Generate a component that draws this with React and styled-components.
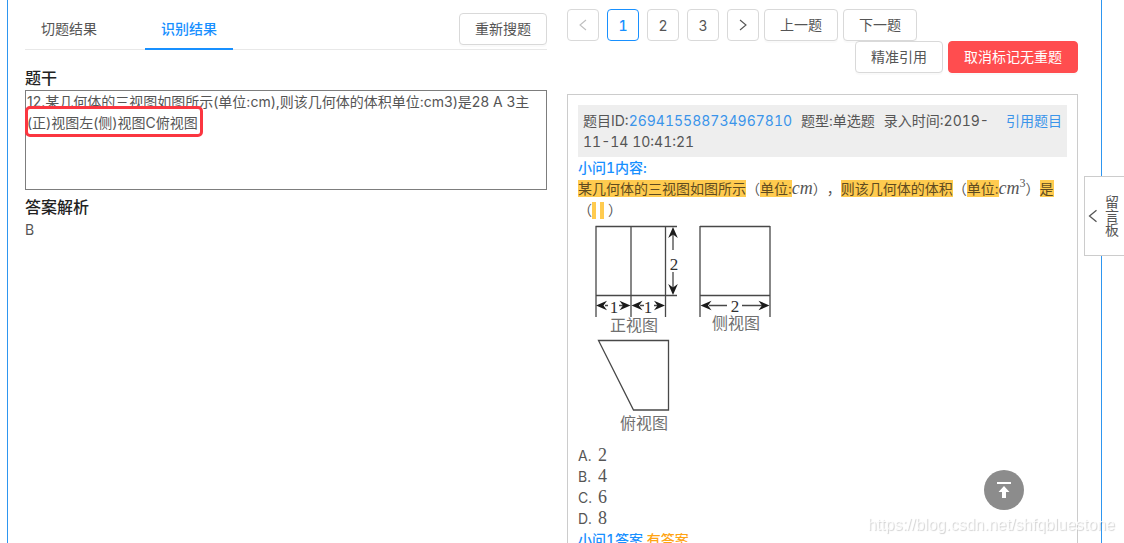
import React from "react";
import styled, { createGlobalStyle, css } from "styled-components";

const blue = "#1890ff";
const linkBlue = "#3a94ea";
const text = "#555";
const line = "#d9d9d9";

const GlobalStyle = createGlobalStyle`
  *, *::before, *::after { box-sizing: border-box; }
  html { scrollbar-width: none; }
  body {
    margin: 0;
    background: #fff;
    color: ${text};
    font: 14px/21px Inter, "Noto Sans CJK SC", sans-serif;
    font-variant-numeric: tabular-nums;
    text-spacing-trim: space-all;
  }
  button, textarea { font: inherit; color: inherit; }
  a { color: ${linkBlue}; text-decoration: none; }
`;

const Frame = styled.main`
  display: grid;
  grid-template-columns: minmax(0, 522fr) minmax(0, 511fr);
  gap: 20px;
  min-height: 100vh;
  margin: 0 22px 0 7px;
  padding: 9px 23px 0 17px;
  border-left: 1px solid #2e96f0;
  border-right: 1px solid #2e96f0;
`;

const Column = styled.section`
  min-width: 0;
`;

const TabBar = styled.div`
  display: flex;
  align-items: flex-start;
  gap: 32px;
  height: 41px;
  margin-bottom: 16px;
  border-bottom: 1px solid #e8e8e8;
`;

const Tab = styled.button`
  height: 41px;
  padding: 0 16px;
  border: 0;
  border-bottom: 2px solid ${(p) => (p.$active ? blue : "transparent")};
  background: none;
  color: ${(p) => (p.$active ? blue : text)};
  font-weight: ${(p) => (p.$active ? 500 : 400)};
  cursor: pointer;
`;

const Button = styled.button`
  height: 32px;
  padding: 0 15px;
  border: 1px solid ${line};
  border-radius: 4px;
  background: #fff;
  box-shadow: 0 2px 0 rgba(0, 0, 0, 0.02);
  line-height: 20px;
  white-space: nowrap;
  cursor: pointer;
  ${(p) =>
    p.$danger &&
    css`
      border-color: #ff4d4f;
      background: #ff4d4f;
      color: #fff;
    `}
`;

const TabAction = styled.div`
  margin: 4px 0 0 auto;
`;

const Heading = styled.label`
  display: block;
  color: #222;
  font-size: 16px;
  font-weight: 500;
  line-height: 24px;
`;

const StemField = styled.div`
  position: relative;
  height: 100px;
  margin-bottom: 5px;
`;

const Stem = styled.textarea`
  display: block;
  width: 100%;
  height: 100%;
  padding: 0 1px;
  border: 1px solid #7d7d7d;
  border-radius: 0;
  outline: 0;
  background: #fff;
  font-variant-numeric: normal;
  resize: none;
`;

const RedOutline = styled.span`
  position: absolute;
  top: 16px;
  left: 0;
  width: 178px;
  height: 31px;
  border: 3px solid #fb3640;
  border-radius: 5px;
  pointer-events: none;
`;

const Answer = styled.output`
  display: block;
`;

const Pager = styled.nav`
  display: flex;
  gap: 5px;
`;

const Pages = styled.div`
  display: flex;
  gap: 8px;
`;

const PageButton = styled.button`
  display: grid;
  place-items: center;
  width: 32px;
  height: 32px;
  padding: 0;
  border: 1px solid ${(p) => (p.$active ? blue : line)};
  border-radius: 4px;
  background: #fff;
  color: ${(p) => (p.$active ? blue : text)};
  font-weight: ${(p) => (p.$active ? 500 : 400)};
  cursor: pointer;
  &:disabled { color: #bfbfbf; cursor: not-allowed; }
`;

const Actions = styled.div`
  display: flex;
  justify-content: flex-end;
  gap: 5px;
  margin-bottom: 21px;
`;

const Card = styled.article`
  padding: 10px;
  border: 1px solid #ccc;
`;

const Meta = styled.header`
  display: flex;
  align-items: flex-start;
  gap: 8px;
  padding: 5px;
  background: #eee;
`;

const MetaText = styled.div`
  flex: 1;
`;

const MetaItem = styled.span`
  margin-right: 9px;
`;

const PartTitle = styled.div`
  color: ${blue};
  font-weight: 500;
`;

const HasAnswer = styled.span`
  color: #ffa414;
`;

const Paragraph = styled.p`
  margin: 0;
`;

const Mark = styled.mark`
  background: #ffcb4f;
  color: #5f4b20;
`;

const Blank = styled.mark`
  display: inline-block;
  width: 4px;
  height: 17px;
  margin-right: 4px;
  background: #ffcb4f;
  vertical-align: -4px;
`;

const MathText = styled.span`
  font-family: "Liberation Serif", serif;
  font-size: 18px;
  line-height: 1px;
  font-style: ${(p) => (p.$upright ? "normal" : "italic")};
`;

const Power = styled.sup`
  font-size: 12px;
  font-style: normal;
  line-height: 1px;
`;

const Figure = styled.figure`
  height: 225px;
  margin: 0;
  padding: 1px 0 0 12px;
`;

const Drawing = styled.svg`
  display: block;
`;

const Options = styled.ol`
  margin: 0;
  padding: 0;
  list-style: none;
`;

const Option = styled.li`
  display: flex;
  align-items: center;
  height: 21px;
`;

const Letter = styled.span`
  width: 20px;
`;

const MessageTab = styled.button`
  position: fixed;
  top: 176px;
  right: 0;
  display: flex;
  align-items: center;
  gap: 4px;
  width: 40px;
  height: 80px;
  padding: 0 0 0 1px;
  border: 1px solid #ccc;
  border-right: 0;
  background: #fff;
  line-height: 14px;
  cursor: pointer;
`;

const MessageLabel = styled.span`
  width: 16px;
`;

const BackTop = styled.button`
  position: fixed;
  right: 100px;
  bottom: 33px;
  display: grid;
  place-items: center;
  width: 40px;
  height: 40px;
  padding: 0;
  border: 0;
  border-radius: 50%;
  background: #8c8c8c;
  color: #fff;
  cursor: pointer;
`;

const Watermark = styled.div`
  position: fixed;
  right: 9px;
  bottom: 8px;
  color: rgba(255, 255, 255, 0.8);
  font: 16px/20px "Liberation Sans", sans-serif;
  text-shadow: 1px 1px 1px rgba(0, 0, 0, 0.18);
  pointer-events: none;
`;

function Chevron({ dir = "left", size = 12 }) {
  return (
    <svg width={size} height={size} viewBox="0 0 12 12" fill="none" stroke="currentColor" aria-hidden="true">
      <path d={dir === "left" ? "M9 1 3 6l6 5" : "M3 1l6 5-6 5"} strokeWidth="1.1" />
    </svg>
  );
}

/* Arrow head with a notched back; the tip is at x,y. */
function Head({ x, y, turn }) {
  return <path d="M0 0 L11 -4.8 L7.5 0 L11 4.8 Z" fill="#1b1b1b" stroke="none" transform={`translate(${x} ${y}) rotate(${turn})`} />;
}

function Views() {
  return (
    <Drawing width="190" height="218" viewBox="0 0 190 218" role="img" aria-label="三视图">
      <g fill="none" stroke="#484848" strokeWidth="1.3">
        <path d="M5.5 5.5H87M6 5v91M41 5v91M75.5 5v91M5.5 74.5H87" />
        <path d="M110 5.5h70M110 5v91M180 5v91M110 74.5h70" />
        <path d="M8.5 119.5H78.5V189H43.5Z" />
        <path d="M83 9v20M83 51v20M15 84.5h3M29 84.5h4M50 84.5h4M64 84.5h4M119 84.5h18M152 84.5h20" />
      </g>
      <Head x={83} y={6} turn={90} />
      <Head x={83} y={74} turn={-90} />
      <Head x={6} y={84.5} turn={0} />
      <Head x={40.5} y={84.5} turn={180} />
      <Head x={41.5} y={84.5} turn={0} />
      <Head x={75} y={84.5} turn={180} />
      <Head x={110.5} y={84.5} turn={0} />
      <Head x={179.5} y={84.5} turn={180} />
      <g fill="#303030" fontFamily="Liberation Serif, serif" fontSize="17" textAnchor="middle">
        <text x="84" y="49">2</text>
        <text x="24" y="92">1</text>
        <text x="58" y="92">1</text>
        <text x="145" y="91">2</text>
      </g>
      <g fill="#707070" fontFamily="Noto Sans CJK SC, sans-serif" fontSize="16" textAnchor="middle">
        <text x="44" y="110">正视图</text>
        <text x="146" y="108">侧视图</text>
        <text x="54" y="208">俯视图</text>
      </g>
    </Drawing>
  );
}

const options = [["A.", "2"], ["B.", "4"], ["C.", "6"], ["D.", "8"]];

export default function App() {
  return (
    <>
      <GlobalStyle />
      <Frame>
        <Column>
          <TabBar role="tablist">
            <Tab role="tab">切题结果</Tab>
            <Tab role="tab" aria-selected="true" $active>识别结果</Tab>
            <TabAction><Button>重新搜题</Button></TabAction>
          </TabBar>
          <Heading htmlFor="stem">题干</Heading>
          <StemField>
            <Stem
              id="stem"
              spellCheck={false}
              defaultValue="12.某几何体的三视图如图所示(单位:cm),则该几何体的体积单位:cm3)是28 A 3主(正)视图左(侧)视图C俯视图"
            />
            <RedOutline />
          </StemField>
          <Heading htmlFor="answer">答案解析</Heading>
          <Answer id="answer">B</Answer>
        </Column>

        <Column>
          <Pager aria-label="分页">
            <Pages>
              <PageButton disabled aria-label="上一页"><Chevron /></PageButton>
              <PageButton $active aria-current="page">1</PageButton>
              <PageButton>2</PageButton>
              <PageButton>3</PageButton>
              <PageButton aria-label="下一页"><Chevron dir="right" /></PageButton>
            </Pages>
            <Button>上一题</Button>
            <Button>下一题</Button>
          </Pager>
          <Actions>
            <Button>精准引用</Button>
            <Button $danger>取消标记无重题</Button>
          </Actions>
          <Card>
            <Meta>
              <MetaText>
                <MetaItem>题目ID:<a href="#question">269415588734967810</a></MetaItem>
                <MetaItem>题型:单选题</MetaItem>
                录入时间:2019-11-14 10:41:21
              </MetaText>
              <a href="#quote">引用题目</a>
            </Meta>
            <PartTitle>小问1内容:</PartTitle>
            <Paragraph>
              <Mark>某几何体的三视图如图所示</Mark>（<Mark>单位:</Mark><MathText>cm</MathText>），
              <Mark>则该几何体的体积</Mark>（<Mark>单位:</Mark><MathText>cm<Power>3</Power></MathText>）<Mark>是</Mark>
              <br />（<Blank /><Blank />）
            </Paragraph>
            <Figure><Views /></Figure>
            <Options>
              {options.map(([letter, value]) => (
                <Option key={letter}>
                  <Letter>{letter}</Letter>
                  <MathText $upright>{value}</MathText>
                </Option>
              ))}
            </Options>
            <PartTitle>小问1答案 <HasAnswer>有答案</HasAnswer></PartTitle>
          </Card>
        </Column>
      </Frame>

      <MessageTab>
        <Chevron size={14} />
        <MessageLabel>留言板</MessageLabel>
      </MessageTab>
      <BackTop aria-label="回到顶部">
        <svg width="16" height="18" viewBox="0 0 16 18" fill="currentColor" aria-hidden="true">
          <path d="M1 1h14v2H1zM8 5l5.5 6h-3.5v6H6v-6H2.5z" />
        </svg>
      </BackTop>
      <Watermark>https://blog.csdn.net/shfqbluestone</Watermark>
    </>
  );
}
